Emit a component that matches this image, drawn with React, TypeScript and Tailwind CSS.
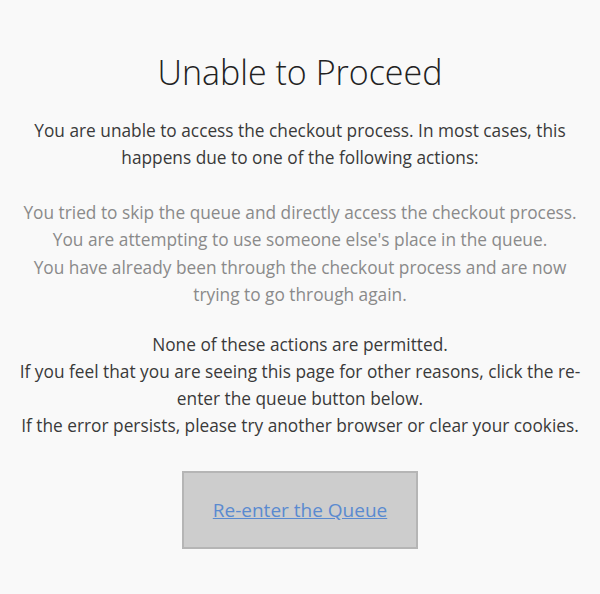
export default function App() {
  return (
    <div className="min-h-[594px] bg-[#f9f9f9] font-['Open_Sans',sans-serif] text-[#3a3a3a]">
      <div className="mx-auto max-w-[600px] px-[16px] pt-[46px] text-center">
        <h1 className="text-[34px] font-light leading-[52px] text-[#222]">Unable to Proceed</h1>
        <p className="mt-[19px] text-[17.3px] leading-[27px]">
          You are unable to access the checkout process. In most cases, this happens due to one of the following actions:
        </p>
        <div className="mt-[28px] text-[17.3px] leading-[27.3px] text-[#8a8a8a]">
          <p>You tried to skip the queue and directly access the checkout process.</p>
          <p>You are attempting to use someone else's place in the queue.</p>
          <p>You have already been through the checkout process and are now trying to go through again.</p>
        </div>
        <div className="mt-[23px] text-[17.3px] leading-[27px]">
          <p>None of these actions are permitted.</p>
          <p>If you feel that you are seeing this page for other reasons, click the re-enter the queue button below.</p>
          <p>If the error persists, please try another browser or clear your cookies.</p>
        </div>
        <div className="mt-[32px] flex justify-center">
          <div className="flex h-[78px] w-[236px] items-center justify-center border-2 border-[#b5b5b5] bg-[#cdcdcd]">
            <a href="#" className="text-[19px] text-[#5a8ad0] underline">
              Re-enter the Queue
            </a>
          </div>
        </div>
      </div>
    </div>
  );
}
